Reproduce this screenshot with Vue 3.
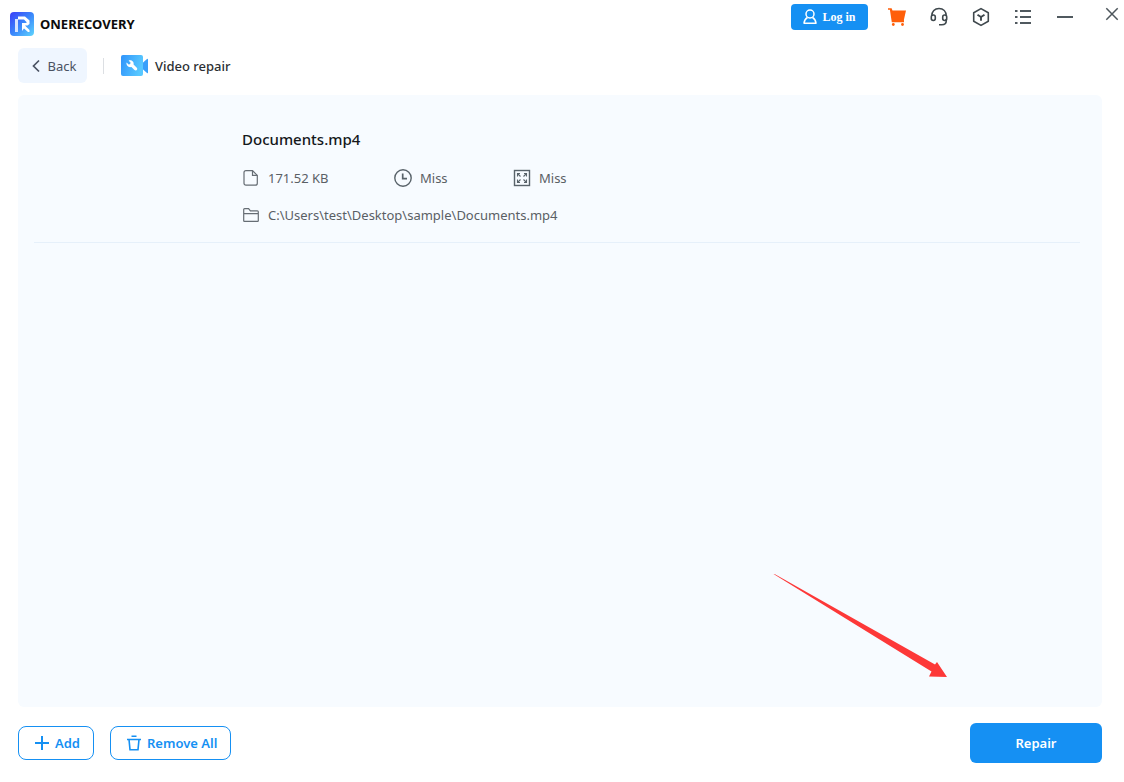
<script setup>
import { ref } from 'vue'

const files = ref([
  {
    name: 'Documents.mp4',
    size: '171.52 KB',
    duration: 'Miss',
    resolution: 'Miss',
    path: 'C:\\Users\\test\\Desktop\\sample\\Documents.mp4',
  },
])

function removeAll() {
  files.value = []
}
</script>

<template>
  <div class="window">
    <header class="titlebar">
      <div class="brand">
        <svg class="logo" width="24" height="24" viewBox="0 0 24 24" aria-hidden="true">
          <defs>
            <linearGradient id="logo-fill" x1="0" y1="0" x2="1" y2="1">
              <stop offset="0" stop-color="#3a3df8" />
              <stop offset="0.5" stop-color="#3a86fb" />
              <stop offset="1" stop-color="#5fd6fd" />
            </linearGradient>
          </defs>
          <rect width="24" height="24" rx="4" fill="url(#logo-fill)" />
          <path d="M5 7h3v13H5z" fill="#d6e4ff" />
          <path d="M8 4.500h7l4.500 4v3.500l-2 1.500H15l4.500 4.500v2H18l-4-3.500-2 2.500v-8h4.500V10L14 7.500H8z" fill="#fff" />
        </svg>
        <span class="brand-name">ONERECOVERY</span>
      </div>
      <div class="actions">
        <button class="login" type="button">
          <svg width="14" height="16" viewBox="0 0 14 16" fill="none" stroke="#fff" stroke-width="1.500" aria-hidden="true">
            <circle cx="7" cy="5" r="4" />
            <path d="M4.500 8.500C2.500 9.500 1.300 11.500 1 14.200h12c-.3-2.700-1.500-4.700-3.500-5.700" stroke-linejoin="round" />
          </svg>
          <span>Log in</span>
        </button>
        <button class="tool" type="button" aria-label="Store">
          <svg width="20" height="20" viewBox="0 0 20 20" fill="#ff5f0a" aria-hidden="true">
            <path d="M1 1.200h3.600l.9 2.300H19l-2.200 9.700H17v2H4.800L2.900 2.800H1z" />
            <circle cx="6.300" cy="17.500" r="1.400" />
            <circle cx="15.500" cy="17.500" r="1.400" />
          </svg>
        </button>
        <button class="tool" type="button" aria-label="Support">
          <svg width="20" height="20" viewBox="0 0 20 20" fill="none" stroke="#3f484d" stroke-width="1.600" aria-hidden="true">
            <path d="M2.800 9C2.800 4.500 5.700 1.500 10 1.500S17.200 4.500 17.200 9" />
            <rect x="2.300" y="8" width="4" height="5.500" rx="1.900" />
            <rect x="13.700" y="8" width="4" height="5.500" rx="1.900" />
            <path d="M17.300 12v1.500c0 2.800-1.500 4.300-4.500 4.300H10" />
          </svg>
        </button>
        <button class="tool" type="button" aria-label="Products">
          <svg width="20" height="20" viewBox="0 0 20 20" fill="none" stroke="#3f484d" stroke-width="1.600" stroke-linejoin="round" aria-hidden="true">
            <path d="M10 1.600l7.300 4.200v8.400L10 18.400l-7.300-4.200V5.800z" />
            <path d="M6.500 7.700L10 10l3.500-2.300M10 10v3.800" stroke-width="1.900" />
          </svg>
        </button>
        <button class="tool" type="button" aria-label="Menu">
          <svg width="20" height="20" viewBox="0 0 20 20" stroke="#50595f" stroke-width="2" aria-hidden="true">
            <path d="M2 4h2.500M7 4h11M2 10h2.500M7 10h11M2 16h2.500M7 16h11" />
          </svg>
        </button>
        <button class="tool" type="button" aria-label="Minimize">
          <svg width="20" height="20" viewBox="0 0 20 20" stroke="#50595f" stroke-width="2" aria-hidden="true">
            <path d="M2 10h16" />
          </svg>
        </button>
        <button class="tool close" type="button" aria-label="Close">
          <svg width="14" height="14" viewBox="0 0 14 14" stroke="#4d565c" stroke-width="1.500" aria-hidden="true">
            <path d="M1.300 1.300l11.400 11.400M12.700 1.300L1.300 12.700" />
          </svg>
        </button>
      </div>
    </header>

    <nav class="crumbs">
      <button class="back" type="button">
        <svg width="8" height="14" viewBox="0 0 8 14" fill="none" stroke="#4a5263" stroke-width="1.700" aria-hidden="true">
          <path d="M7 1.500L1.500 7 7 12.500" />
        </svg>
        <span>Back</span>
      </button>
      <span class="divider"></span>
      <h1 class="page-title">
        <svg width="28" height="22" viewBox="0 0 28 22" aria-hidden="true">
          <defs>
            <linearGradient id="camera-fill" x1="0" y1="0" x2="1" y2="0.300">
              <stop offset="0" stop-color="#2f93fb" />
              <stop offset="1" stop-color="#58c8ff" />
            </linearGradient>
          </defs>
          <path d="M21 8.500L26 4q1-.8 1 .5v13q0 1.300-1 .5l-5-4.500z" fill="#389ffb" />
          <rect width="22" height="21" rx="2" fill="url(#camera-fill)" />
          <path d="M5.500 7.500l2.500 2.300 1.800-1.700L7.600 5.600c2.700-1 5.600.9 5 4l3.200 3.200c1.500 1.500-.7 3.800-2.300 2.300l-3.100-3.100c-3 .8-5.300-1.700-4.900-4.500z" fill="#fff" />
        </svg>
        <span>Video repair</span>
      </h1>
    </nav>

    <main class="panel">
      <ul class="files">
        <li v-for="file in files" :key="file.path" class="file">
          <h2 class="file-name">{{ file.name }}</h2>
          <div class="meta">
            <span class="item">
              <svg width="18" height="18" viewBox="0 0 18 18" fill="none" stroke="#666d74" stroke-width="1.200" aria-hidden="true">
                <path d="M4 1.600h6.500l4.800 4.800v7.800q0 2-2 2H4q-2 0-2-2V3.600q0-2 2-2z" />
                <path d="M10.500 1.600v4.800h4.800" />
              </svg>
              {{ file.size }}
            </span>
            <span class="item">
              <svg width="18" height="18" viewBox="0 0 18 18" fill="none" stroke="#59636a" stroke-width="1.400" aria-hidden="true">
                <circle cx="9" cy="9" r="8.200" />
                <path d="M8.700 4.500v5.200H13" stroke-width="1.700" />
              </svg>
              {{ file.duration }}
            </span>
            <span class="item">
              <svg width="18" height="18" viewBox="0 0 18 18" fill="none" stroke="#59636a" stroke-width="1.400" aria-hidden="true">
                <rect x="1.500" y="1.500" width="15" height="15" />
                <path d="M4.500 7.500v-3h2.500M4.500 4.500l3 3M13.500 7.500v-3H11M13.500 4.500l-3 3M4.500 10.500v3H7M4.500 13.500l3-3M13.500 10.500v3H11M13.500 13.500l-3-3" stroke-width="1.100" />
              </svg>
              {{ file.resolution }}
            </span>
          </div>
          <div class="item">
            <svg width="18" height="18" viewBox="0 0 18 18" fill="none" stroke="#666d74" stroke-width="1.200" aria-hidden="true">
              <path d="M1.700 14.700V3.500q0-.9.900-.9h4l1.800 2.300h7q.9 0 .9.900v8.900q0 .6-.6.600H2.300q-.6 0-.6-.6zM1.700 7.700h14.600" />
            </svg>
            {{ file.path }}
          </div>
        </li>
      </ul>
      <svg class="pointer" width="174" height="105" viewBox="0 0 174 105" aria-hidden="true">
        <path d="M0.500 1L2 1.200 162 91.500 164 89 174 104 156 103.500 158.500 98.500z" fill="#fd3838" />
      </svg>
    </main>

    <footer class="footer">
      <button class="outline" type="button">
        <svg width="16" height="16" viewBox="0 0 16 16" stroke="#1590f3" stroke-width="2" aria-hidden="true">
          <path d="M8 1v14M1 8h14" />
        </svg>
        <span>Add</span>
      </button>
      <button class="outline" type="button" @click="removeAll">
        <svg width="16" height="16" viewBox="0 0 16 16" fill="none" stroke="#1590f3" stroke-width="1.600" aria-hidden="true">
          <path d="M5.500 1.200h5M1 4.500h14M3 4.500l1 10.200h8l1-10.200" />
        </svg>
        <span>Remove All</span>
      </button>
      <button class="repair" type="button">Repair</button>
    </footer>
  </div>
</template>

<style>
body {
  margin: 0;
  background: #fff;
}
</style>

<style scoped>
.window {
  box-sizing: border-box;
  min-height: 100vh;
  display: flex;
  flex-direction: column;
  font-family: "Noto Sans", "Open Sans", sans-serif;
  font-size: 13px;
  line-height: 20px;
  color: #5a5f65;
}
button {
  font: inherit;
  color: inherit;
  border: 0;
  padding: 0;
  background: none;
  display: flex;
  align-items: center;
  justify-content: center;
  cursor: pointer;
}
svg {
  display: block;
  flex: none;
}
.titlebar {
  height: 48px;
  display: flex;
  justify-content: space-between;
  align-items: flex-start;
}
.brand {
  display: flex;
  align-items: center;
  gap: 6px;
  padding: 12px 0 0 10px;
}
.brand-name {
  font-weight: 700;
  color: #0c0c0c;
}
.actions {
  display: flex;
  align-items: center;
  gap: 18px;
  padding-top: 4px;
}
.login {
  gap: 5px;
  width: 77px;
  height: 26px;
  margin-right: -1px;
  border-radius: 4px;
  background: #1590f3;
  color: #fff;
  font-family: "Liberation Serif", serif;
  font-size: 12px;
  font-weight: 700;
}
.tool {
  width: 24px;
  height: 26px;
}
.close {
  height: 20px;
  margin-left: 5px;
  align-self: flex-start;
}
.crumbs {
  display: flex;
  align-items: center;
  padding: 0 18px;
  height: 35px;
}
.back {
  gap: 8px;
  width: 69px;
  height: 35px;
  padding-left: 3px;
  border-radius: 6px;
  background: #eff6ff;
  color: #4a5263;
}
.divider {
  width: 1px;
  height: 16px;
  margin: 0 17px 0 16px;
  background: #dcdfe3;
}
.page-title {
  display: flex;
  align-items: center;
  gap: 6px;
  margin: 0;
  font-size: 13px;
  font-weight: 500;
  color: #2b2f33;
}
.panel {
  position: relative;
  flex: 1;
  margin: 12px 22px 16px 18px;
  border-radius: 6px;
  background: #f7fbff;
}
.files {
  list-style: none;
  margin: 0;
  padding: 0 22px 0 16px;
}
.file {
  display: flex;
  flex-direction: column;
  gap: 17px;
  padding: 34px 0 17px 208px;
  border-bottom: 1px solid #e6f0fa;
}
.file-name {
  margin: 0;
  padding-bottom: 2px;
  font-size: 15px;
  font-weight: 500;
  line-height: 20px;
  color: #15181b;
}
.meta {
  display: grid;
  grid-template-columns: 152px 119px auto;
}
.item {
  display: flex;
  align-items: center;
  gap: 8px;
}
.pointer {
  position: absolute;
  right: 155px;
  bottom: 29px;
}
.footer {
  display: flex;
  align-items: center;
  gap: 16px;
  padding: 0 22px 19px 18px;
}
.outline {
  gap: 5px;
  height: 34px;
  padding: 0 13px 0 15px;
  border: 1px solid #1590f3;
  border-radius: 8px;
  color: #1590f3;
  font-weight: 600;
}
.repair {
  width: 132px;
  height: 40px;
  margin-left: auto;
  border-radius: 6px;
  background: #1590f3;
  color: #fff;
  font-weight: 600;
}
</style>
